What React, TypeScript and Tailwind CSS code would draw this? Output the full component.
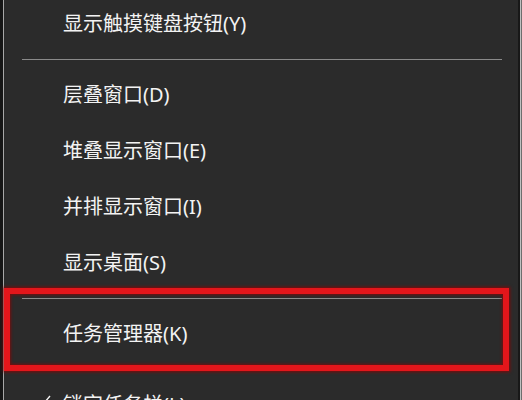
import React from "react";

const font = { fontFamily: '"Noto Sans", "Noto Sans CJK SC", sans-serif' };

function Item({ label, checked = false }: { label: string; checked?: boolean }) {
  return (
    <div className="relative h-[56px] shrink-0 flex items-center pl-[59px] text-[20px] text-[#f3f3f3] leading-none">
      {checked && (
        <svg className="absolute left-[32px] top-[16px] w-[16px] h-[16px]" viewBox="0 0 16 16" fill="none">
          <path d="M2 8.5l4 4L14 3" stroke="#f3f3f3" strokeWidth="1.4" />
        </svg>
      )}
      <span>{label}</span>
    </div>
  );
}

function Separator() {
  return (
    <div className="h-[15px] shrink-0 flex items-center pl-[18px] pr-[16px]">
      <div className="h-px w-[480px] bg-[#8a8a8a]" />
    </div>
  );
}

export default function App() {
  return (
    <div className="w-[522px] h-[400px] overflow-hidden flex bg-[#2b2b2b]" style={font}>
      {/* left frame */}
      <div className="w-[3px] shrink-0 bg-[#161616]" />
      <div className="w-px shrink-0 bg-[#a8a8a8]" />

      <div className="flex-1 flex flex-col mt-[-4px]">
        <Item label="显示触摸键盘按钮(Y)" />
        <Separator />
        <Item label="层叠窗口(D)" />
        <Item label="堆叠显示窗口(E)" />
        <Item label="并排显示窗口(I)" />
        <Item label="显示桌面(S)" />

        <div className="relative shrink-0">
          <Separator />
          <Item label="任务管理器(K)" />
          <Separator />
          {/* highlight annotation */}
          <div className="absolute left-0 top-[-3px] w-[505px] h-[83px] border-[6px] border-[#e3161b] shadow-[0_0_3px_1px_rgba(150,0,0,0.8),inset_0_0_3px_1px_rgba(150,0,0,0.7)]" />
        </div>

        <Item label="锁定任务栏(L)" checked />
      </div>

      {/* right frame */}
      <div className="w-[2px] shrink-0 bg-[#181818]" />
      <div className="w-px shrink-0 bg-[#c0c0c0]" />
      <div className="w-[2px] shrink-0 bg-[#6e6e6e]" />
    </div>
  );
}
